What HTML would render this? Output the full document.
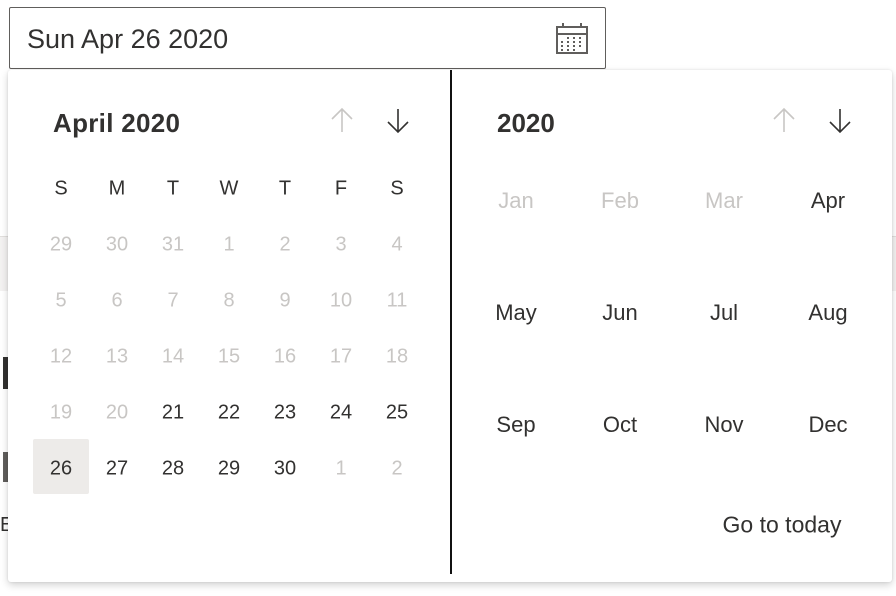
<!DOCTYPE html>
<html><head><style>
body{margin:0;width:896px;height:596px;background:#fff;position:relative;overflow:hidden;font-family:"Liberation Sans",sans-serif;color:#323130}
.a{position:absolute}
.band{left:0;top:236px;width:896px;height:54px;background:#f3f2f1;border-top:1px solid #e1dfdd}
.inp{left:9px;top:7px;width:595px;height:60px;border:1px solid #605e5c;border-radius:2px;background:#fff}
.pop{left:8px;top:70px;width:884px;height:512px;background:#fff;border-radius:3px;box-shadow:0 3px 8px rgba(0,0,0,.18),0 0 2px rgba(0,0,0,.1)}
.c{position:absolute;transform:translate(-50%,-50%);white-space:nowrap}
.d{font-size:20px}
.g{color:#c8c6c4}
.m{font-size:22px}
</style></head><body>
<div class="a band"></div>
<div class="a" style="left:3px;top:357px;width:5px;height:32px;background:#323130"></div>
<div class="a" style="left:3px;top:452px;width:5px;height:30px;background:#605e5c"></div>
<div class="a" style="left:0;top:514px;font-size:20px">E</div>
<div class="a inp"><span class="a" style="left:17px;top:16px;font-size:27px;color:#323130">Sun Apr 26 2020</span></div>
<svg class="a" style="left:550px;top:18px" width="44" height="40" viewBox="550 18 44 40">
<g fill="none" stroke="#605e5c" stroke-width="2"><rect x="557" y="27" width="30" height="26"/><line x1="557" y1="34" x2="587" y2="34"/><line x1="563" y1="23" x2="563" y2="28"/><line x1="581" y1="23" x2="581" y2="28"/></g>
<g fill="#605e5c">
<rect x="567" y="37" width="2" height="2"/><rect x="573" y="37" width="2" height="2"/><rect x="579" y="37" width="2" height="2"/>
<rect x="561" y="41" width="2" height="2"/><rect x="567" y="41" width="2" height="2"/><rect x="573" y="41" width="2" height="2"/><rect x="579" y="41" width="2" height="2"/>
<rect x="561" y="45" width="2" height="2"/><rect x="567" y="45" width="2" height="2"/><rect x="573" y="45" width="2" height="2"/><rect x="579" y="45" width="2" height="2"/>
<rect x="561" y="49" width="2" height="2"/><rect x="567" y="49" width="2" height="2"/><rect x="573" y="49" width="2" height="2"/></g></svg>
<div class="a pop"></div>
<div class="a" style="left:450px;top:70px;width:2px;height:504px;background:#111"></div>
<div class="a" style="left:53px;top:108px;font-size:26px;font-weight:bold;letter-spacing:0.3px">April 2020</div>
<div class="a" style="left:497px;top:108px;font-size:26px;font-weight:bold">2020</div>
<svg class="a" style="left:0;top:0" width="896" height="596">
<g fill="none" stroke-width="1.6">
<path d="M342 109V132M332 119L342 109L352 119" stroke="#c8c6c4"/>
<path d="M398 109V132M388 122L398 132L408 122" stroke="#323130"/>
<path d="M784 109V132M774 119L784 109L794 119" stroke="#c8c6c4"/>
<path d="M840 109V132M830 122L840 132L850 122" stroke="#323130"/>
</g></svg>
<div class="a" style="left:33px;top:439px;width:56px;height:55px;background:#edebe9;border-radius:2px"></div>
<div id="days"></div>
<script>
var h='';var xs=[61,117,173,229,285,341,397];
['S','M','T','W','T','F','S'].forEach((s,i)=>h+=`<div class="c d" style="left:${xs[i]}px;top:189px">${s}</div>`);
var rows=[[29,30,31,1,2,3,4],[5,6,7,8,9,10,11],[12,13,14,15,16,17,18],[19,20,21,22,23,24,25],[26,27,28,29,30,1,2]];
rows.forEach((r,ri)=>r.forEach((n,i)=>{var g=ri<3||(ri==3&&i<2)||(ri==4&&i>4);h+=`<div class="c d${g?' g':''}" style="left:${xs[i]}px;top:${245+ri*56}px">${n}</div>`}));
var ms=['Jan','Feb','Mar','Apr','May','Jun','Jul','Aug','Sep','Oct','Nov','Dec'],mx=[516,620,724,828];
ms.forEach((m,i)=>h+=`<div class="c m${i<3?' g':''}" style="left:${mx[i%4]}px;top:${201+Math.floor(i/4)*112}px">${m}</div>`);
h+=`<div class="c m" style="left:782px;top:525px;font-size:23px">Go to today</div>`;
document.getElementById('days').innerHTML=h;
</script>
</body></html>
